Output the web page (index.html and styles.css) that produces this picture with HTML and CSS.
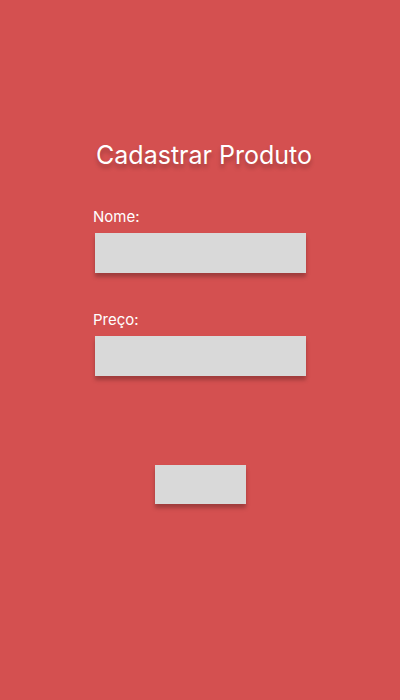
FILE: index.html
```html
<!DOCTYPE html>
<html lang="pt-BR">
<head>
<meta charset="utf-8">
<title>Cadastrar Produto</title>
<link rel="stylesheet" href="styles.css">
</head>
<body>
<main class="page">
  <h1 class="title">Cadastrar Produto</h1>
  <form class="form">
    <label class="field">
      <span class="label">Nome:</span>
      <input class="input" type="text">
    </label>
    <label class="field">
      <span class="label">Preço:</span>
      <input class="input" type="text">
    </label>
    <button class="submit" type="button"></button>
  </form>
</main>
</body>
</html>
```
FILE: styles.css
```css
html, body {
  margin: 0;
  padding: 0;
  background: #d45050;
  font-family: Inter, "Noto Sans", sans-serif;
  color: #ffffff;
}
.page {
  width: 400px;
  height: 700px;
  box-sizing: border-box;
  padding-top: 138px;
  display: flex;
  flex-direction: column;
  align-items: center;
}
.title {
  margin: 0;
  padding-left: 8px;
  font-size: 25px;
  font-weight: 400;
  line-height: 34px;
  text-shadow: 0 4px 4px rgba(0, 0, 0, 0.25);
}
.form {
  width: 214px;
  margin-top: 35px;
  display: flex;
  flex-direction: column;
}
.field {
  display: flex;
  flex-direction: column;
  gap: 7px;
  margin-bottom: 37px;
}
.label {
  font-size: 15px;
  line-height: 19px;
}
.input {
  margin: 0 0 0 2px;
  width: 211px;
  height: 40px;
  box-sizing: border-box;
  border: none;
  background: #d9d9d9;
  box-shadow: 0 4px 4px rgba(0, 0, 0, 0.25);
}
.submit {
  align-self: center;
  margin: 52px 0 0 1px;
  width: 91px;
  height: 39px;
  border: none;
  padding: 0;
  background: #d9d9d9;
  box-shadow: 0 4px 4px rgba(0, 0, 0, 0.25);
}
```
